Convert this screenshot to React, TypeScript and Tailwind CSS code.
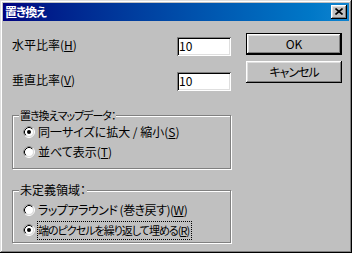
import React from "react";

const font =
  "font-['Noto_Sans_CJK_JP','Noto_Sans_CJK_SC',sans-serif] [font-feature-settings:'palt']";
const raised =
  "shadow-[inset_-1px_-1px_#000,inset_1px_1px_#fff,inset_-2px_-2px_#808080,inset_2px_2px_#dfdfdf]";
const sunken =
  "shadow-[inset_1px_1px_#808080,inset_-1px_-1px_#fff,inset_2px_2px_#000,inset_-2px_-2px_#dfdfdf]";

function Radio({ checked }: { checked: boolean }) {
  return (
    <svg width="12" height="12" viewBox="0 0 12 12" className="shrink-0">
      <circle cx="6" cy="6" r="5.5" fill="none" stroke="#fff" />
      <path d="M2.11 9.89 A5.5 5.5 0 0 1 9.89 2.11" fill="none" stroke="#808080" />
      <circle cx="6" cy="6" r="4.5" fill="#fff" stroke="#dfdfdf" />
      <path d="M2.82 9.18 A4.5 4.5 0 0 1 9.18 2.82" fill="none" stroke="#000" />
      {checked && <circle cx="6" cy="6" r="2" fill="#000" />}
    </svg>
  );
}

function RadioRow({
  checked,
  focused,
  className = "",
  children,
}: {
  checked: boolean;
  focused?: boolean;
  className?: string;
  children: React.ReactNode;
}) {
  return (
    <div className="flex h-[20px] items-center">
      <Radio checked={checked} />
      <span
        className={`ml-[2px] flex h-[19px] items-center border border-dotted pr-[2px] leading-[14px] ${
          focused ? "border-black" : "border-transparent"
        } ${className}`}
      >
        {children}
      </span>
    </div>
  );
}

function Group({
  label,
  labelClass = "",
  className,
  children,
}: {
  label: string;
  labelClass?: string;
  className: string;
  children: React.ReactNode;
}) {
  return (
    <div
      className={`relative w-[219px] border border-[#808080] shadow-[1px_1px_#fff,inset_1px_1px_#fff] pl-[10px] ${className}`}
    >
      <span
        className={`absolute left-[6px] top-[-8px] bg-[#c0c0c0] px-[1px] leading-[14px] ${labelClass}`}
      >
        {label}
      </span>
      {children}
    </div>
  );
}

function Field({ label, u }: { label: string; u: string }) {
  return (
    <div className="flex w-[219px] items-start">
      <span className="mt-[1px] leading-[14px]">
        {label}(<u>{u}</u>)
      </span>
      <div
        className={`ml-auto h-[19px] w-[54px] bg-white pl-[2px] pt-[2px] leading-[14px] ${sunken}`}
      >
        10
      </div>
    </div>
  );
}

export default function App() {
  return (
    <div
      className={`flex h-[253px] w-[352px] flex-col bg-[#c0c0c0] p-[3px] text-[12px] text-black ${font} shadow-[inset_-1px_-1px_#000,inset_1px_1px_#dfdfdf,inset_-2px_-2px_#808080,inset_2px_2px_#fff]`}
    >
      <div className="flex h-[18px] items-center bg-gradient-to-r from-[#000080] to-[#1084d0] pl-[2px] pr-[2px]">
        <span className="text-[12px] font-bold leading-[14px] tracking-[-1px] text-white">
          置き換え
        </span>
        <div
          className={`ml-auto flex h-[14px] w-[16px] items-center justify-center bg-[#c0c0c0] ${raised}`}
        >
          <svg width="8" height="7" viewBox="0 0 8 7" className="-mt-[1px]">
            <path d="M0.5 0.5 L7.5 6.5 M7.5 0.5 L0.5 6.5" stroke="#000" strokeWidth="1.6" />
          </svg>
        </div>
      </div>
      <div className="flex pl-[9px]">
        <div className="flex w-[220px] flex-col">
          <div className="mt-[16px]">
            <Field label="水平比率" u="H" />
          </div>
          <div className="mt-[16px]">
            <Field label="垂直比率" u="V" />
          </div>
          <Group
            label="置き換えマップデータ："
            labelClass="text-[11px] tracking-[-1px]"
            className="mt-[24px] h-[54px] pt-[6px]"
          >
            <RadioRow checked>
              同一サイズに拡大 / 縮小(<u>S</u>)
            </RadioRow>
            <RadioRow checked={false}>
              並べて表示(<u>T</u>)
            </RadioRow>
          </Group>
          <Group label="未定義領域：" className="mt-[21px] h-[53px] pt-[9px]">
            <RadioRow checked={false} className="tracking-[-0.5px]">
              ラップアラウンド (巻き戻す)(<u>W</u>)
            </RadioRow>
            <RadioRow checked focused className="text-[11px] tracking-[-1px]">
              端のピクセルを繰り返して埋める(<u>R</u>)
            </RadioRow>
          </Group>
        </div>
        <div className="ml-[14px] flex flex-col">
          <div className="mt-[12px] h-[22px] w-[96px] border border-black bg-[#c0c0c0]">
            <div className={`flex h-full w-full items-center justify-center leading-[14px] ${raised}`}>
              OK
            </div>
          </div>
          <div
            className={`mt-[6px] flex h-[22px] w-[96px] items-center justify-center leading-[14px] tracking-[-1px] ${raised}`}
          >
            キャンセル
          </div>
        </div>
      </div>
    </div>
  );
}
